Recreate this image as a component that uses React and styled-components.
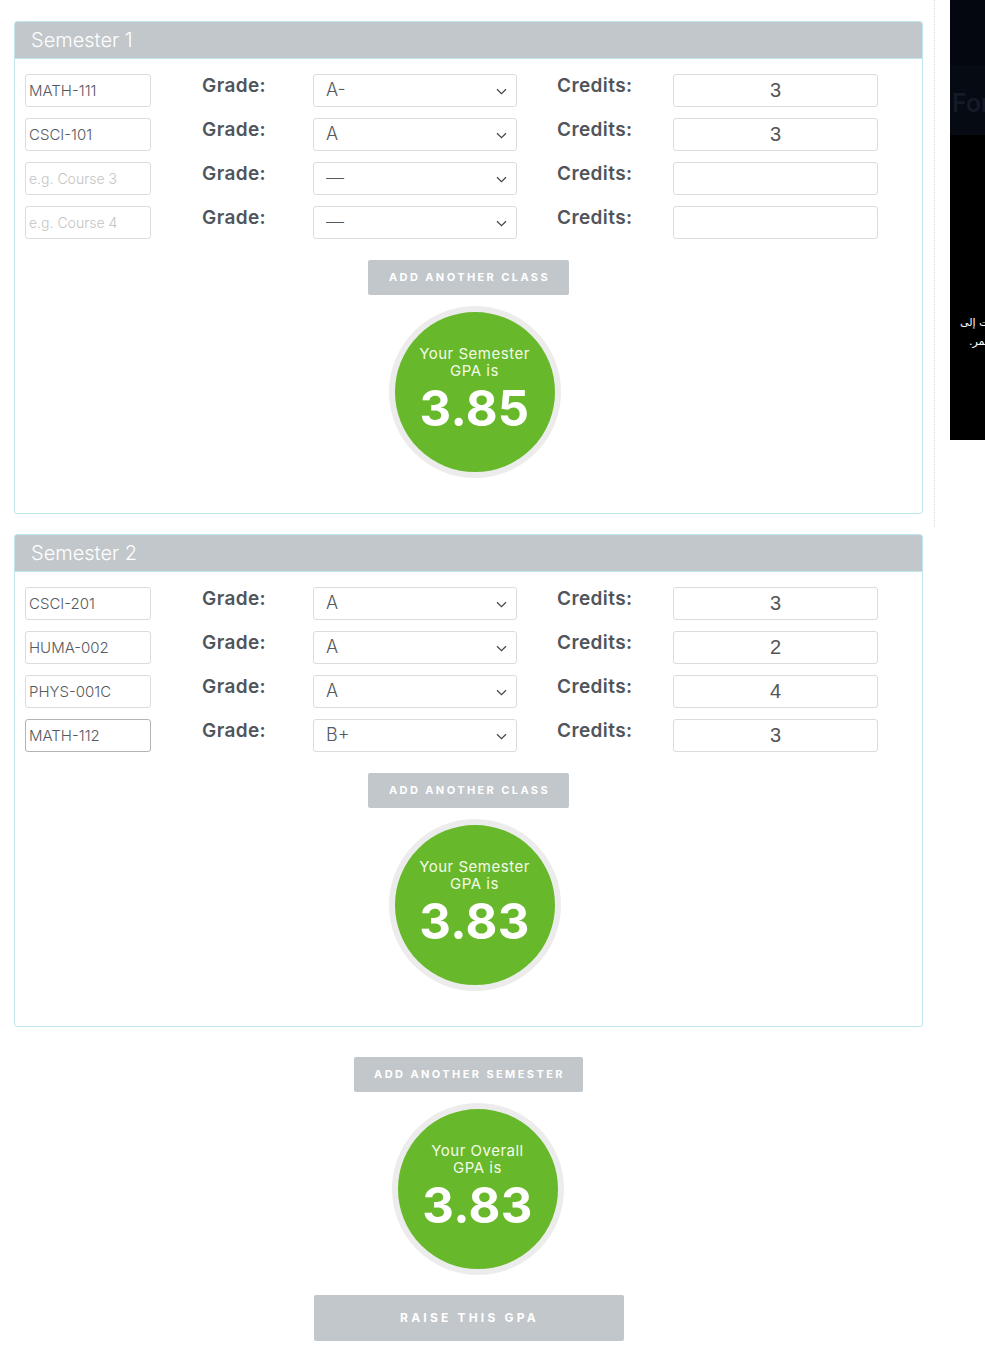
import React from "react";
import styled, { createGlobalStyle } from "styled-components";

const GlobalStyle = createGlobalStyle`
  html, body {
    margin: 0;
    padding: 0;
    background: #ffffff;
    overflow-x: hidden;
  }
  body {
    font-family: Inter, "Open Sans", sans-serif;
    color: #555a60;
  }
`;

const semesters = [
  {
    title: "Semester 1",
    gpa: "3.85",
    rows: [
      { course: "MATH-111", grade: "A-", credits: "3" },
      { course: "CSCI-101", grade: "A", credits: "3" },
      { course: "", placeholder: "e.g. Course 3", grade: "—", credits: "" },
      { course: "", placeholder: "e.g. Course 4", grade: "—", credits: "" },
    ],
  },
  {
    title: "Semester 2",
    gpa: "3.83",
    rows: [
      { course: "CSCI-201", grade: "A", credits: "3" },
      { course: "HUMA-002", grade: "A", credits: "2" },
      { course: "PHYS-001C", grade: "A", credits: "4" },
      { course: "MATH-112", grade: "B+", credits: "3", focused: true },
    ],
  },
];

const Chevron = () => (
  <svg width="11" height="7" viewBox="0 0 11 7" fill="none">
    <path d="M1 1.2 L5.5 5.6 L10 1.2" stroke="#444" strokeWidth="1.2" />
  </svg>
);

const ClassRow = ({ row }) => (
  <Row>
    <CourseInput
      defaultValue={row.course}
      placeholder={row.placeholder}
      $focused={row.focused}
    />
    <Label>Grade:</Label>
    <SelectWrap>
      <GradeSelect defaultValue={row.grade}>
        <option>{row.grade}</option>
      </GradeSelect>
      <ChevronBox>
        <Chevron />
      </ChevronBox>
    </SelectWrap>
    <Label>Credits:</Label>
    <CreditInput defaultValue={row.credits} />
  </Row>
);

const GpaCircle = ({ label, value, $shift }) => (
  <Circle $shift={$shift}>
    <CircleLabel>{label}</CircleLabel>
    <CircleLabel>GPA is</CircleLabel>
    <CircleValue>{value}</CircleValue>
  </Circle>
);

const App = () => {
  return (
    <>
      <GlobalStyle />
      <Page>
        <Main>
          {semesters.map((s) => (
            <Card key={s.title}>
              <CardHeader>{s.title}</CardHeader>
              <CardBody>
                <Rows>
                  {s.rows.map((r, i) => (
                    <ClassRow key={i} row={r} />
                  ))}
                </Rows>
                <GrayButton $width={201}>Add another class</GrayButton>
                <GpaCircle label="Your Semester" value={s.gpa} $shift={12} />
              </CardBody>
            </Card>
          ))}

          <Footer>
            <GrayButton $width={229}>Add another semester</GrayButton>
            <GpaCircle label="Your Overall" value="3.83" $shift={18} />
            <RaiseButton>Raise this GPA</RaiseButton>
          </Footer>
        </Main>

        <Sidebar>
          <AdBox>
            <AdTop />
            <AdHeading>For</AdHeading>
            <AdText>
              <AdLine>كل الطرق المؤدية للنجاح وصلت إلى</AdLine>
              <AdLine $indent={9}>طريق واحد هو العمل طوال العمر.</AdLine>
            </AdText>
          </AdBox>
        </Sidebar>
      </Page>
    </>
  );
};

export default App;

const Page = styled.div`
  display: flex;
  align-items: flex-start;
  width: 985px;
  overflow: hidden;
`;

const Main = styled.div`
  flex: none;
  width: 934px;
  box-sizing: border-box;
  padding: 21px 11px 30px 14px;
  display: flex;
  flex-direction: column;
  gap: 20px;
`;

const Card = styled.div`
  border: 1px solid #bfe7ee;
  border-radius: 3px;
  background: #fff;
  overflow: hidden;
`;

const CardHeader = styled.div`
  height: 36px;
  background: #c2c7cb;
  color: #ffffff;
  font-size: 20px;
  font-weight: 300;
  line-height: 36px;
  padding-left: 16px;
  border-bottom: 1px solid #bfe7ee;
`;

const CardBody = styled.div`
  padding: 15px 10px 35px;
  display: flex;
  flex-direction: column;
  align-items: center;
`;

const Rows = styled.div`
  align-self: stretch;
  display: flex;
  flex-direction: column;
  gap: 11px;
  margin-bottom: 21px;
`;

const Row = styled.div`
  display: grid;
  grid-template-columns: 177px 111px 244px 116px 205px;
  align-items: start;
  height: 33px;
`;

const fieldBase = `
  box-sizing: border-box;
  height: 33px;
  border: 1px solid #dcdcdc;
  border-radius: 3px;
  background: #fff;
  color: #555a60;
  outline: none;
`;

const CourseInput = styled.input`
  ${fieldBase}
  width: 126px;
  padding: 0 3px;
  font-family: Inter, sans-serif;
  font-size: 15px;
  font-weight: 300;
  border-color: ${(p) => (p.$focused ? "#b4b4b4" : "#dcdcdc")};

  &::placeholder {
    color: #c4c4c4;
    font-size: 14px;
  }
`;

const Label = styled.div`
  font-size: 19px;
  font-weight: 600;
  letter-spacing: 0.4px;
  line-height: 23px;
  color: #50555b;
`;

const SelectWrap = styled.div`
  position: relative;
  width: 204px;
`;

const GradeSelect = styled.select`
  ${fieldBase}
  appearance: none;
  width: 204px;
  padding: 0 0 2px 12px;
  font-family: Inter, sans-serif;
  font-size: 18px;
  font-weight: 300;
`;

const ChevronBox = styled.span`
  position: absolute;
  right: 10px;
  top: 14px;
  display: flex;
  pointer-events: none;
`;

const CreditInput = styled.input`
  ${fieldBase}
  width: 205px;
  text-align: center;
  font-family: "Liberation Sans", Arial, sans-serif;
  font-size: 20px;
  color: #555;
`;

const GrayButton = styled.button`
  box-sizing: border-box;
  width: ${(p) => p.$width}px;
  height: 35px;
  border: none;
  border-radius: 2px;
  background: #c2c7cb;
  color: #ffffff;
  font-family: Inter, sans-serif;
  font-size: 11px;
  font-weight: 700;
  letter-spacing: 2.4px;
  text-transform: uppercase;
  padding: 0 0 2px 2px;
  cursor: pointer;
`;

const Circle = styled.div`
  box-sizing: content-box;
  width: 160px;
  height: 160px;
  margin: 11px 0 0 ${(p) => p.$shift}px;
  border: 6px solid #ececec;
  border-radius: 50%;
  background: #67b82a;
  color: #ffffff;
  display: flex;
  flex-direction: column;
  align-items: center;
  justify-content: center;
  text-align: center;
`;

const CircleLabel = styled.div`
  font-size: 15px;
  font-weight: 400;
  letter-spacing: 0.5px;
  line-height: 17px;
  color: #f4fbe8;
`;

const CircleValue = styled.div`
  font-size: 49px;
  font-weight: 700;
  line-height: 60px;
  margin: 0;
  letter-spacing: 0.3px;
`;

const Footer = styled.div`
  display: flex;
  flex-direction: column;
  align-items: center;
  padding-top: 10px;
`;

const RaiseButton = styled(GrayButton)`
  width: 310px;
  height: 46px;
  margin-top: 20px;
  font-size: 12px;
  letter-spacing: 3.2px;
`;

const Sidebar = styled.div`
  flex: none;
  width: 51px;
  height: 527px;
  border-left: 1px dotted #d8d8d8;
  padding-left: 15px;
  box-sizing: border-box;
  overflow: hidden;
`;

const AdBox = styled.div`
  width: 300px;
  height: 440px;
  background: #000000;
`;

const AdTop = styled.div`
  height: 65px;
  background: #04070f;
`;

const AdHeading = styled.div`
  height: 70px;
  background: #060a13;
  color: #141a28;
  font-family: Inter, sans-serif;
  font-size: 25px;
  font-weight: 600;
  line-height: 76px;
  padding-left: 2px;
`;

const AdText = styled.div`
  margin-top: 178px;
  width: 260px;
  padding-left: 10px;
  color: #ffffff;
  font-family: "DejaVu Sans", "Noto Sans", sans-serif;
  font-size: 11px;
  line-height: 19px;
`;

const AdLine = styled.div`
  direction: rtl;
  text-align: left;
  white-space: nowrap;
  padding-left: ${(p) => p.$indent || 0}px;
`;
